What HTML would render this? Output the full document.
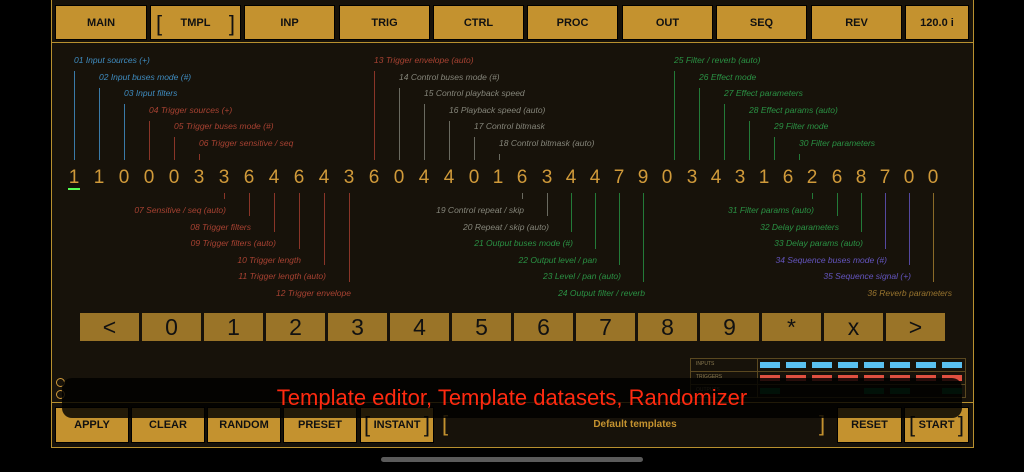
<!DOCTYPE html>
<html><head><meta charset="utf-8"><style>
*{margin:0;padding:0;box-sizing:border-box}
body{width:1024px;height:472px;background:#000;position:relative;overflow:hidden;font-family:"Liberation Sans",sans-serif}
.frame{position:absolute;left:51px;top:0;width:923px;height:448px;border:1px solid #b8902f;border-top:none;background:#17120a}
.b{position:absolute;background:#c4922f;color:#111;font-weight:bold;font-size:11px;display:flex;align-items:center;justify-content:center;border:1px solid #000}
.k{position:absolute;top:313px;height:28px;width:59px;background:#9a7428;color:#111;font-size:23px;display:flex;align-items:center;justify-content:center}
.l{position:absolute;font-size:8.5px;font-style:italic;line-height:12px;white-space:nowrap}
.r{transform:translateX(-100%)}
.v{position:absolute;width:1px}
.d{position:absolute;top:166px;font-size:19px;color:#d09a3a;width:20px;margin-left:-10px;text-align:center;line-height:24px}
.bl{color:#3f8cc0}.v.bl{background:#3a7aa8}
.rd{color:#a84232}.v.rd{background:#8a3528}
.gr{color:#85857a}.v.gr{background:#6a6a60}
.gn{color:#2a9244}.v.gn{background:#237a38}
.pu{color:#6455c0}.v.pu{background:#5548a0}
.go{color:#98742e}.v.go{background:#8a6a28}
.br{position:absolute;top:6px;font-size:22px;font-weight:normal;line-height:24px}
</style></head><body>
<div class="frame"></div>
<div style="position:absolute;left:51px;top:42px;width:923px;height:1px;background:#b8902f"></div>
<div style="position:absolute;left:51px;top:402px;width:923px;height:1px;background:#b8902f"></div>

<div class="b" style="left:55px;top:5px;width:92px;height:35px">MAIN</div>
<div class="b" style="left:150px;top:5px;width:91px;height:35px">TMPL<span class="br" style="left:5px">[</span><span class="br" style="right:5px">]</span></div>
<div class="b" style="left:244px;top:5px;width:91px;height:35px">INP</div>
<div class="b" style="left:339px;top:5px;width:91px;height:35px">TRIG</div>
<div class="b" style="left:433px;top:5px;width:91px;height:35px">CTRL</div>
<div class="b" style="left:527px;top:5px;width:91px;height:35px">PROC</div>
<div class="b" style="left:622px;top:5px;width:91px;height:35px">OUT</div>
<div class="b" style="left:716px;top:5px;width:91px;height:35px">SEQ</div>
<div class="b" style="left:811px;top:5px;width:91px;height:35px">REV</div>
<div class="b" style="left:905px;top:5px;width:64px;height:35px">120.0 i</div>

<!-- top labels -->
<div class="l bl" style="left:74px;top:54px">01 Input sources (+)</div><div class="v bl" style="left:74px;top:71px;height:89px"></div>
<div class="l bl" style="left:99px;top:71px">02 Input buses mode (#)</div><div class="v bl" style="left:99px;top:88px;height:72px"></div>
<div class="l bl" style="left:124px;top:87px">03 Input filters</div><div class="v bl" style="left:124px;top:104px;height:56px"></div>
<div class="l rd" style="left:149px;top:104px">04 Trigger sources (+)</div><div class="v rd" style="left:149px;top:121px;height:39px"></div>
<div class="l rd" style="left:174px;top:120px">05 Trigger buses mode (#)</div><div class="v rd" style="left:174px;top:137px;height:23px"></div>
<div class="l rd" style="left:199px;top:137px">06 Trigger sensitive / seq</div><div class="v rd" style="left:199px;top:154px;height:6px"></div>

<div class="l rd" style="left:374px;top:54px">13 Trigger envelope (auto)</div><div class="v rd" style="left:374px;top:71px;height:89px"></div>
<div class="l gr" style="left:399px;top:71px">14 Control buses mode (#)</div><div class="v gr" style="left:399px;top:88px;height:72px"></div>
<div class="l gr" style="left:424px;top:87px">15 Control playback speed</div><div class="v gr" style="left:424px;top:104px;height:56px"></div>
<div class="l gr" style="left:449px;top:104px">16 Playback speed (auto)</div><div class="v gr" style="left:449px;top:121px;height:39px"></div>
<div class="l gr" style="left:474px;top:120px">17 Control bitmask</div><div class="v gr" style="left:474px;top:137px;height:23px"></div>
<div class="l gr" style="left:499px;top:137px">18 Control bitmask (auto)</div><div class="v gr" style="left:499px;top:154px;height:6px"></div>

<div class="l gn" style="left:674px;top:54px">25 Filter / reverb (auto)</div><div class="v gn" style="left:674px;top:71px;height:89px"></div>
<div class="l gn" style="left:699px;top:71px">26 Effect mode</div><div class="v gn" style="left:699px;top:88px;height:72px"></div>
<div class="l gn" style="left:724px;top:87px">27 Effect parameters</div><div class="v gn" style="left:724px;top:104px;height:56px"></div>
<div class="l gn" style="left:749px;top:104px">28 Effect params (auto)</div><div class="v gn" style="left:749px;top:121px;height:39px"></div>
<div class="l gn" style="left:774px;top:120px">29 Filter mode</div><div class="v gn" style="left:774px;top:137px;height:23px"></div>
<div class="l gn" style="left:799px;top:137px">30 Filter parameters</div><div class="v gn" style="left:799px;top:154px;height:6px"></div>

<!-- digits -->
<div class="d" style="left:74px">1</div><div class="d" style="left:99px">1</div><div class="d" style="left:124px">0</div><div class="d" style="left:149px">0</div><div class="d" style="left:174px">0</div><div class="d" style="left:199px">3</div><div class="d" style="left:224px">3</div><div class="d" style="left:249px">6</div><div class="d" style="left:274px">4</div><div class="d" style="left:299px">6</div><div class="d" style="left:324px">4</div><div class="d" style="left:349px">3</div><div class="d" style="left:374px">6</div><div class="d" style="left:399px">0</div><div class="d" style="left:424px">4</div><div class="d" style="left:449px">4</div><div class="d" style="left:474px">0</div><div class="d" style="left:498px">1</div><div class="d" style="left:522px">6</div><div class="d" style="left:547px">3</div><div class="d" style="left:571px">4</div><div class="d" style="left:595px">4</div><div class="d" style="left:619px">7</div><div class="d" style="left:643px">9</div><div class="d" style="left:667px">0</div><div class="d" style="left:692px">3</div><div class="d" style="left:716px">4</div><div class="d" style="left:740px">3</div><div class="d" style="left:764px">1</div><div class="d" style="left:788px">6</div><div class="d" style="left:812px">2</div><div class="d" style="left:837px">6</div><div class="d" style="left:861px">8</div><div class="d" style="left:885px">7</div><div class="d" style="left:909px">0</div><div class="d" style="left:933px">0</div>
<div style="position:absolute;left:68px;top:188px;width:12px;height:2px;background:#5f5"></div>

<!-- bottom labels -->
<div class="l rd r" style="left:226px;top:204px">07 Sensitive / seq (auto)</div><div class="v rd" style="left:224px;top:193px;height:6px"></div>
<div class="l rd r" style="left:251px;top:221px">08 Trigger filters</div><div class="v rd" style="left:249px;top:193px;height:23px"></div>
<div class="l rd r" style="left:276px;top:237px">09 Trigger filters (auto)</div><div class="v rd" style="left:274px;top:193px;height:39px"></div>
<div class="l rd r" style="left:301px;top:254px">10 Trigger length</div><div class="v rd" style="left:299px;top:193px;height:56px"></div>
<div class="l rd r" style="left:326px;top:270px">11 Trigger length (auto)</div><div class="v rd" style="left:324px;top:193px;height:72px"></div>
<div class="l rd r" style="left:351px;top:287px">12 Trigger envelope</div><div class="v rd" style="left:349px;top:193px;height:89px"></div>

<div class="l gr r" style="left:524px;top:204px">19 Control repeat / skip</div><div class="v gr" style="left:522px;top:193px;height:6px"></div>
<div class="l gr r" style="left:549px;top:221px">20 Repeat / skip (auto)</div><div class="v gr" style="left:547px;top:193px;height:23px"></div>
<div class="l gn r" style="left:573px;top:237px">21 Output buses mode (#)</div><div class="v gn" style="left:571px;top:193px;height:39px"></div>
<div class="l gn r" style="left:597px;top:254px">22 Output level / pan</div><div class="v gn" style="left:595px;top:193px;height:56px"></div>
<div class="l gn r" style="left:621px;top:270px">23 Level / pan (auto)</div><div class="v gn" style="left:619px;top:193px;height:72px"></div>
<div class="l gn r" style="left:645px;top:287px">24 Output filter / reverb</div><div class="v gn" style="left:643px;top:193px;height:89px"></div>

<div class="l gn r" style="left:814px;top:204px">31 Filter params (auto)</div><div class="v gn" style="left:812px;top:193px;height:6px"></div>
<div class="l gn r" style="left:839px;top:221px">32 Delay parameters</div><div class="v gn" style="left:837px;top:193px;height:23px"></div>
<div class="l gn r" style="left:863px;top:237px">33 Delay params (auto)</div><div class="v gn" style="left:861px;top:193px;height:39px"></div>
<div class="l pu r" style="left:887px;top:254px">34 Sequence buses mode (#)</div><div class="v pu" style="left:885px;top:193px;height:56px"></div>
<div class="l pu r" style="left:911px;top:270px">35 Sequence signal (+)</div><div class="v pu" style="left:909px;top:193px;height:72px"></div>
<div class="l go r" style="left:952px;top:287px">36 Reverb parameters</div><div class="v go" style="left:933px;top:193px;height:89px"></div>

<!-- keypad -->
<div class="k" style="left:80px">&lt;</div><div class="k" style="left:142px">0</div><div class="k" style="left:204px">1</div><div class="k" style="left:266px">2</div><div class="k" style="left:328px">3</div><div class="k" style="left:390px">4</div><div class="k" style="left:452px">5</div><div class="k" style="left:514px">6</div><div class="k" style="left:576px">7</div><div class="k" style="left:638px">8</div><div class="k" style="left:700px">9</div><div class="k" style="left:762px">*</div><div class="k" style="left:824px">x</div><div class="k" style="left:886px">&gt;</div>

<!-- table -->
<div style="position:absolute;left:690px;top:358px;width:276px;height:40px;border:1px solid #5a4820">
<div style="position:absolute;left:0;top:12px;width:274px;height:1px;background:#5a4820"></div>
<div style="position:absolute;left:0;top:25px;width:274px;height:1px;background:#5a4820"></div>
<div style="position:absolute;left:66px;top:0;width:1px;height:38px;background:#5a4820"></div>
<div style="position:absolute;left:5px;top:2px;font-size:5px;color:#8a7a50">INPUTS</div>
<div style="position:absolute;left:5px;top:15px;font-size:5px;color:#8a7a50">TRIGGERS</div>
<div style="position:absolute;left:5px;top:28px;font-size:5px;color:#8a7a50">OUTPUTS</div>
</div>
<div style="position:absolute;left:760px;top:362px;width:205px;height:6px;background:repeating-linear-gradient(90deg,#5ac0f0 0 20px,transparent 20px 26px)"></div>
<div style="position:absolute;left:760px;top:375px;width:100px;height:6px;background:repeating-linear-gradient(90deg,#e05040 0 20px,transparent 20px 26px)"></div>
<div style="position:absolute;left:864px;top:375px;width:100px;height:6px;background:repeating-linear-gradient(90deg,#e05040 0 20px,transparent 20px 26px)"></div>
<div style="position:absolute;left:760px;top:388px;width:20px;height:6px;background:#0a6030"></div>
<div style="position:absolute;left:864px;top:388px;width:46px;height:6px;background:repeating-linear-gradient(90deg,#0a6030 0 20px,transparent 20px 26px)"></div>
<div style="position:absolute;left:942px;top:388px;width:20px;height:6px;background:#0a6030"></div>

<!-- bottom bar -->
<div class="b" style="left:55px;top:407px;width:74px;height:36px">APPLY</div>
<div class="b" style="left:131px;top:407px;width:74px;height:36px">CLEAR</div>
<div class="b" style="left:207px;top:407px;width:74px;height:36px">RANDOM</div>
<div class="b" style="left:283px;top:407px;width:74px;height:36px">PRESET</div>
<div class="b" style="left:360px;top:407px;width:74px;height:36px">INSTANT<span class="br" style="left:3px;top:5px">[</span><span class="br" style="right:3px;top:5px">]</span></div>
<div style="position:absolute;left:442px;top:411px;font-size:22px;color:#c4922f">[</div>
<div style="position:absolute;left:819px;top:411px;font-size:22px;color:#c4922f">]</div>
<div style="position:absolute;left:440px;top:419px;width:390px;text-align:center;font-size:10px;font-weight:bold;color:#c4922f">Default templates</div>
<div class="b" style="left:837px;top:407px;width:65px;height:36px">RESET</div>
<div class="b" style="left:904px;top:407px;width:65px;height:36px">START<span class="br" style="left:4px;top:5px">[</span><span class="br" style="right:4px;top:5px">]</span></div>

<!-- circles -->
<div style="position:absolute;left:56px;top:378px;width:9px;height:9px;border:1px solid #d09a3a;border-radius:50%"></div>
<div style="position:absolute;left:56px;top:390px;width:9px;height:9px;border:1px solid #d09a3a;border-radius:50%"></div>

<!-- overlay -->
<div style="position:absolute;left:62px;top:378px;width:900px;height:40px;background:rgba(0,0,0,0.82);border-radius:10px"></div>
<div style="position:absolute;left:62px;top:384px;width:900px;text-align:center;font-size:22px;color:#ff2a10;line-height:28px">Template editor, Template datasets, Randomizer</div>

<div style="position:absolute;left:381px;top:457px;width:262px;height:5px;border-radius:3px;background:#5a5a5a"></div>
</body></html>
